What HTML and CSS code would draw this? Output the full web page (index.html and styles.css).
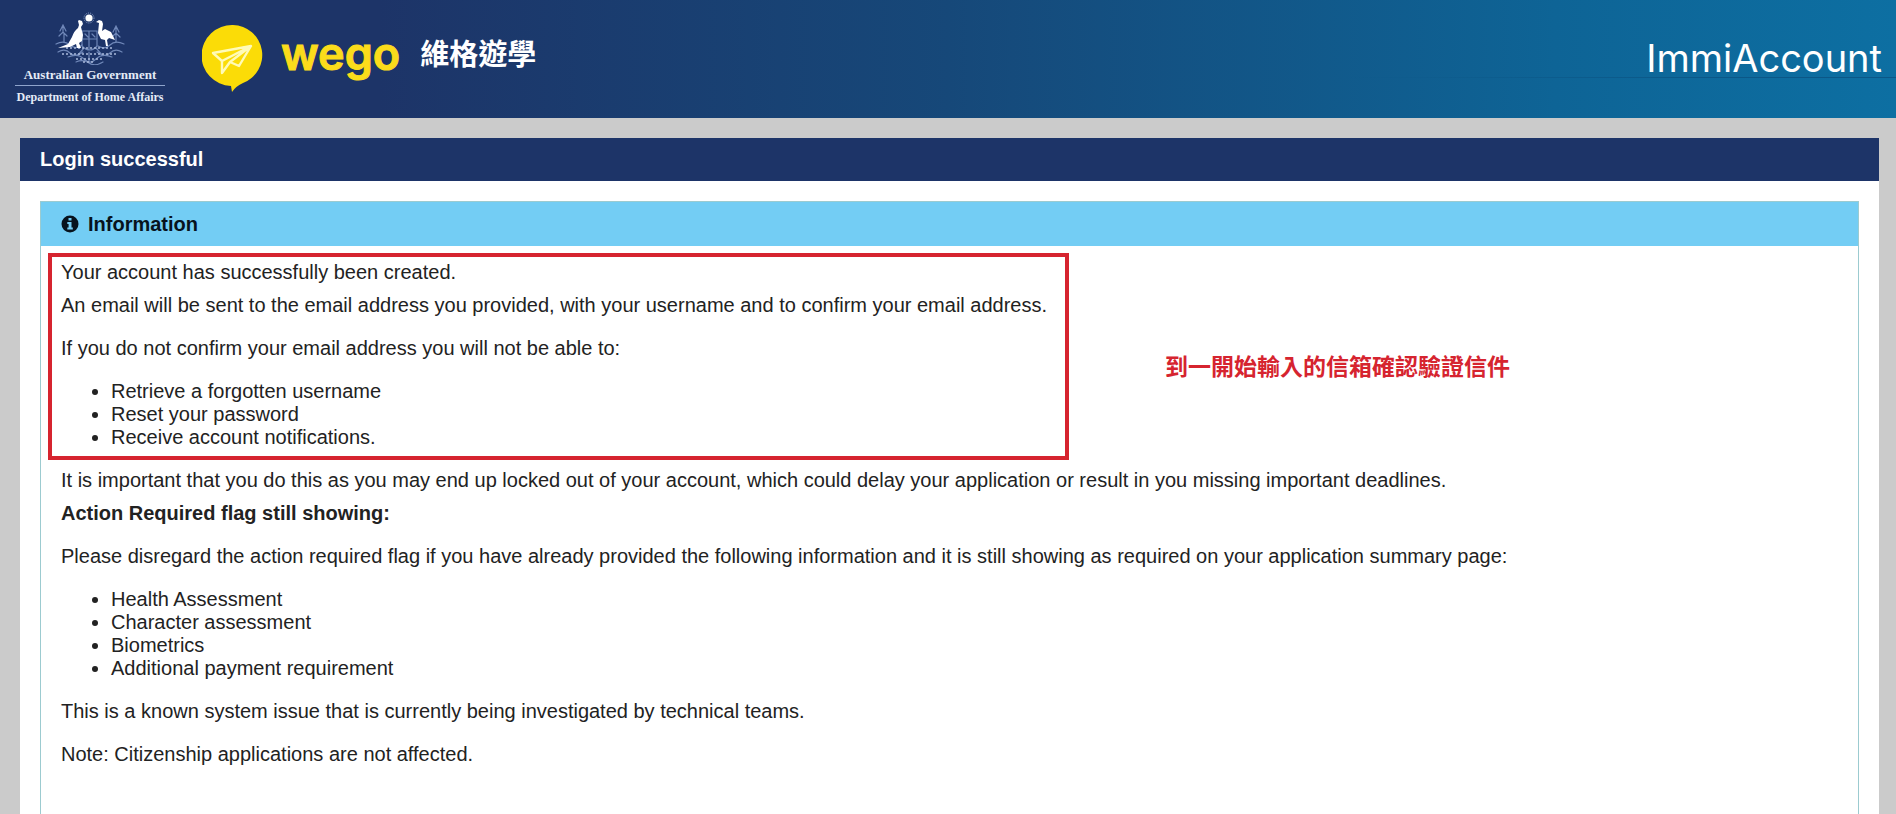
FILE: index.html
```html
<!DOCTYPE html>
<html lang="en">
<head>
<meta charset="utf-8">
<title>ImmiAccount</title>
<link rel="stylesheet" href="styles.css">
</head>
<body>
<header class="site-header">
  <div class="gov">
    <svg class="crest" viewBox="0 0 72 54" aria-hidden="true">
      <g fill="none" stroke="#6f87b8" stroke-width="1.2" stroke-linecap="round">
        <path d="M2 33q8-4 14 1t12 0M44 35q7 4 12-1t14-1M4 41q7-4 12 1t13-1M68 41q-7-4-12 1t-13-1M14 46q10-4 16 2t12 0 16-2M22 51q7-3 13 1t14-1"/>
        <path d="M9 14v8M6 20l3-6 3 6M5 25l4-4 4 4M10 23v8M62 15v7M59 21l3-6 3 6M58 26l4-4 4 4M62 23v8"/>
        <path d="M28 20h15v15q-7 8-15 0zM35 20v18M28 28h15M31 23l3 3M38 23l3 3M30 37l-6 7M42 37l6 7M35 41v10"/>
      </g>
      <g stroke="#a9b9da" stroke-width="1.4" fill="none" stroke-dasharray="2 2"><path d="M12 37h48M8 43h54M22 48h28M29 51h12"/></g>
      <circle cx="35" cy="7" r="3.6" fill="#fff"/>
      <circle cx="35" cy="7" r="5" fill="none" stroke="#8ea3ca" stroke-dasharray="1 1"/>
      <path d="M25 9l3 1 1 3-2 3 2 8-1 6-3 2 2 5h-4l-1-4-6 3-12 1 10-4 4-7q2-6 6-9l1-3-1-4z" fill="#fff"/>
      <path d="M45 9l3 1 1 3-1 7 3-2 6 3 4 8-6-2-2 2 1 6h-2l-1-6-4-1-3-6 1-10-3-1z" fill="#fff"/>
    </svg>
    <span class="gov-name">Australian Government</span>
    <span class="gov-dept">Department of Home Affairs</span>
  </div>
  <div class="wego">
    <svg class="wego-mark" viewBox="0 0 62 70" aria-hidden="true">
      <path d="M31 1a30 30 0 0 1 10 58q-7 3-11 9l-1-6A30 30 0 0 1 31 1z" fill="#fbdc07"/>
      <path d="M49 22L11 29l9 8zM49 22L37 42l-9-4zM20 37v12l8-11M28 38L49 22" fill="none" stroke="#fffbb8" stroke-width="2.4" stroke-linejoin="round" stroke-linecap="round"/>
    </svg>
    <div class="wego-text">
      <span class="wego-name">wego</span>
      <span class="wego-cjk" lang="zh-Hant">維格遊學</span>
    </div>
  </div>
  <div class="product">ImmiAccount</div>
</header>
<main class="panel">
  <h1 class="panel-title">Login successful</h1>
  <section class="info">
    <h2 class="info-title">
      <svg class="info-icon" viewBox="0 0 18 18" aria-hidden="true"><circle cx="9" cy="9" r="8.5" fill="#07131d"/><path d="M7.5 3h3v2.6h-3zM6.3 7h4.2v5.6h1.3v2H6.3v-2h1.3V9H6.3z" fill="#73cdf4"/></svg>
      Information
    </h2>
    <div class="info-body">
      <div class="marked">
        <p class="lead">Your account has successfully been created.</p>
        <p>An email will be sent to the email address you provided, with your username and to confirm your email address.</p>
        <p>If you do not confirm your email address you will not be able to:</p>
        <ul>
          <li>Retrieve a forgotten username</li>
          <li>Reset your password</li>
          <li>Receive account notifications.</li>
        </ul>
        <div class="frame"></div>
        <div class="note" lang="zh-Hant">到一開始輸入的信箱確認驗證信件</div>
      </div>
      <p class="lead">It is important that you do this as you may end up locked out of your account, which could delay your application or result in you missing important deadlines.</p>
      <p><strong>Action Required flag still showing:</strong></p>
      <p>Please disregard the action required flag if you have already provided the following information and it is still showing as required on your application summary page:</p>
      <ul>
        <li>Health Assessment</li>
        <li>Character assessment</li>
        <li>Biometrics</li>
        <li>Additional payment requirement</li>
      </ul>
      <p>This is a known system issue that is currently being investigated by technical teams.</p>
      <p>Note: Citizenship applications are not affected.</p>
    </div>
  </section>
</main>
</body>
</html>
```
FILE: styles.css
```css
* { box-sizing: border-box; }
html { height: 100%; overflow: hidden; }
body {
  margin: 0;
  min-height: 100%;
  display: flex;
  flex-direction: column;
  background: #cbcbcb;
  color: #222;
  font: 20px/23px "Liberation Sans", Arial, sans-serif;
}
.site-header {
  display: flex;
  align-items: flex-start;
  min-height: 118px;
  padding: 0 14px 0 15px;
  color: #fff;
  background:
    linear-gradient(90deg, transparent 70%, #0b5787 90%) 0 77px / 100% 1px no-repeat,
    linear-gradient(90deg, #1d3468 0%, #1d3468 20%, #164879 50%, #0e6496 82%, #0d6fa2 100%);
}
.gov {
  display: flex;
  flex-direction: column;
  align-items: center;
  width: 150px;
  padding-top: 11px;
  font: bold 13px/20px "Liberation Serif", "Times New Roman", serif;
  white-space: nowrap;
  color: #e4ebf7;
}
.crest { width: 72px; height: 54px; }
.gov-name {
  align-self: stretch;
  text-align: center;
  border-bottom: 1px solid #8fa4cc;
}
.gov-dept { font-size: 12px; line-height: 22px; }
.wego {
  display: flex;
  align-items: flex-start;
  margin-left: 37px;
  padding-top: 24px;
}
.wego-mark { width: 62px; height: 70px; }
.wego-text {
  display: flex;
  align-items: flex-start;
  gap: 20px;
  margin-left: 17px;
}
.wego-name {
  font: 600 45px/60px Inter, sans-serif;
  color: #fbdc1b;
  -webkit-text-stroke: 1px #fbdc1b;
}
.wego-cjk {
  font: bold 29px/56px "Noto Sans CJK TC", sans-serif;
}
.product {
  margin-left: auto;
  padding-top: 36px;
  font: 400 38px/44px Inter, sans-serif;
}
.panel {
  flex: 1;
  display: flex;
  flex-direction: column;
  margin: 20px 17px 0 20px;
  background: #fff;
}
.panel-title {
  margin: 0;
  padding: 10px 20px;
  font-size: 20px;
  line-height: 23px;
  color: #fff;
  background: #1d3468;
}
.info {
  flex: 1;
  margin: 20px 20px 0;
  border: 1px solid #9ccbd0;
  border-bottom: 0;
}
.info-title {
  display: flex;
  align-items: center;
  gap: 9px;
  margin: 0;
  padding: 10px 20px;
  font-size: 20px;
  line-height: 24px;
  color: #07131d;
  background: #73cdf4;
}
.info-icon { width: 18px; height: 18px; }
.info-body { padding: 15px 20px 0; }
p, ul { margin: 0 0 20px; }
ul { padding-left: 50px; }
.lead { margin-bottom: 10px; }
.marked { position: relative; }
.frame {
  position: absolute;
  top: -8px;
  bottom: -11px;
  left: -13px;
  width: 1021px;
  border: 4px solid #d6242f;
}
.note {
  position: absolute;
  top: 88px;
  left: 1104px;
  font: bold 23px/32px "Noto Sans CJK TC", sans-serif;
  color: #d6242f;
}
```
